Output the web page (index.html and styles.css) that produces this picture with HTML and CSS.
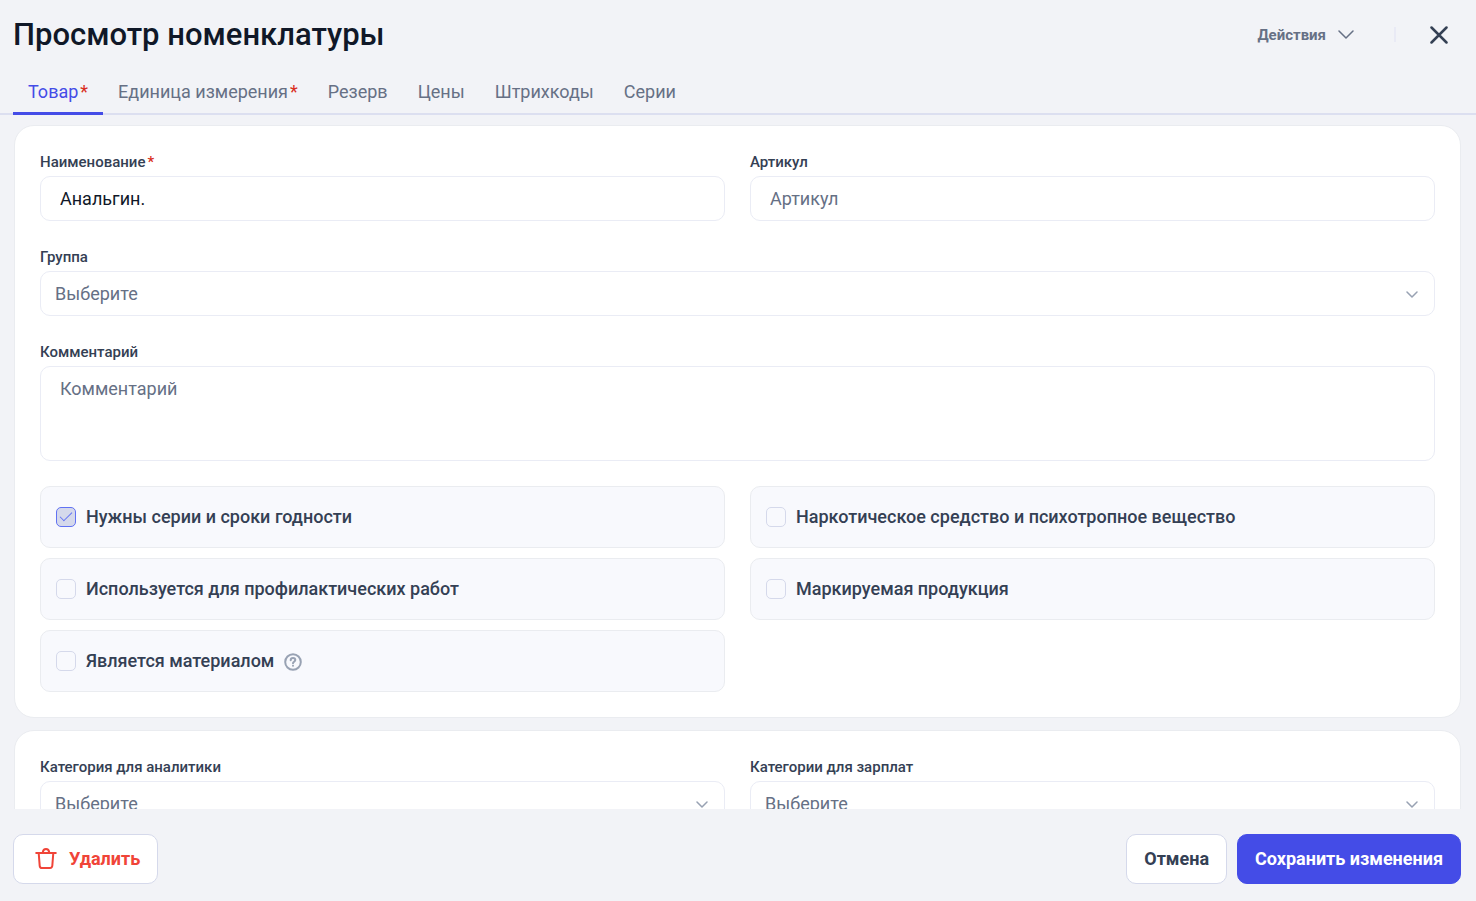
FILE: index.html
```html
<!DOCTYPE html>
<html lang="ru">
<head>
  <meta charset="UTF-8">
  <meta name="viewport" content="width=device-width, initial-scale=1.0">
  <title>Просмотр номенклатуры</title>
  <link rel="stylesheet" href="styles.css">
</head>
<body>
  <header class="header">
    <h1>Просмотр номенклатуры</h1>
    <div class="header-tools">
      <button type="button" class="actions">
        Действия
        <svg width="16" height="10" viewBox="0 0 16 10"><path d="M1 1l7 7 7-7"/></svg>
      </button>
      <span class="divider"></span>
      <button type="button" class="close" aria-label="Закрыть">
        <svg width="18" height="18" viewBox="0 0 18 18"><path d="M1.500 1.500l15 15M16.500 1.500l-15 15"/></svg>
      </button>
    </div>
  </header>

  <nav class="tabs">
    <a href="#" class="tab active">Товар<span class="required">*</span></a>
    <a href="#" class="tab">Единица измерения<span class="required">*</span></a>
    <a href="#" class="tab">Резерв</a>
    <a href="#" class="tab">Цены</a>
    <a href="#" class="tab">Штрихкоды</a>
    <a href="#" class="tab">Серии</a>
  </nav>

  <main class="content">
    <section class="card">
      <div class="row">
        <div class="field">
          <label for="name">Наименование<span class="required">*</span></label>
          <input type="text" id="name" class="control" value="Анальгин.">
        </div>
        <div class="field">
          <label for="sku">Артикул</label>
          <input type="text" id="sku" class="control" placeholder="Артикул">
        </div>
      </div>

      <div class="field">
        <label for="group">Группа</label>
        <div class="select">
          <select id="group" class="control"><option>Выберите</option></select>
          <svg class="chevron" width="12" height="8" viewBox="0 0 12 8"><path d="M1 1l5 5 5-5"/></svg>
        </div>
      </div>

      <div class="field">
        <label for="comment">Комментарий</label>
        <textarea id="comment" class="control" placeholder="Комментарий"></textarea>
      </div>

      <div class="checks">
        <label class="check"><input type="checkbox" checked disabled>Нужны серии и сроки годности</label>
        <label class="check"><input type="checkbox">Наркотическое средство и психотропное вещество</label>
        <label class="check"><input type="checkbox">Используется для профилактических работ</label>
        <label class="check"><input type="checkbox">Маркируемая продукция</label>
        <label class="check"><input type="checkbox">Является материалом
          <svg class="help" width="18" height="20" viewBox="0 0 18 20">
            <circle cx="9" cy="11" r="7.800"/>
            <path d="M6.700 9.300C6.700 7.900 7.700 7.100 9 7.100s2.300.8 2.300 2c0 1.600-2.300 1.700-2.300 3.100"/>
            <path d="M9 14.700v.1"/>
          </svg>
        </label>
      </div>
    </section>

    <section class="card">
      <div class="row">
        <div class="field">
          <label for="analytics">Категория для аналитики</label>
          <div class="select">
            <select id="analytics" class="control"><option>Выберите</option></select>
            <svg class="chevron" width="12" height="8" viewBox="0 0 12 8"><path d="M1 1l5 5 5-5"/></svg>
          </div>
        </div>
        <div class="field">
          <label for="salary">Категории для зарплат</label>
          <div class="select">
            <select id="salary" class="control"><option>Выберите</option></select>
            <svg class="chevron" width="12" height="8" viewBox="0 0 12 8"><path d="M1 1l5 5 5-5"/></svg>
          </div>
        </div>
      </div>
    </section>
  </main>

  <footer class="footer">
    <button type="button" class="button delete">
      <svg width="22" height="22" viewBox="0 0 22 22">
        <path d="M1.200 5h19.600M7.700 4.600C8 2.300 9.100 1 11 1s3 1.300 3.300 3.600M3.700 5l1 12.800c.1 1.500.9 2.200 2.300 2.200h8c1.400 0 2.200-.7 2.300-2.200l1-12.800"/>
      </svg>
      Удалить
    </button>
    <button type="button" class="button cancel">Отмена</button>
    <button type="button" class="button primary">Сохранить изменения</button>
  </footer>
</body>
</html>
```
FILE: styles.css
```css
* {
  box-sizing: border-box;
}
body {
  display: flex;
  flex-direction: column;
  height: 100vh;
  margin: 0;
  background-color: #f2f3f7;
  font-family: Roboto, sans-serif;
  font-size: 18px;
  color: #344054;
}
button, input, select, textarea {
  font: inherit;
  color: inherit;
}
svg {
  flex-shrink: 0;
  fill: none;
  stroke: currentColor;
  stroke-linecap: round;
  stroke-linejoin: round;
}
.header {
  display: flex;
  align-items: center;
  justify-content: space-between;
  height: 69px;
  padding: 0 28px 0 13px;
}
.header h1 {
  margin: 0;
  font-size: 31px;
  font-weight: 500;
  color: #101828;
}
.header-tools {
  display: flex;
  align-items: center;
}
.actions, .close {
  display: flex;
  align-items: center;
  padding: 0;
  border: 0;
  background: none;
  cursor: pointer;
}
.actions {
  gap: 12px;
  font-size: 15px;
  font-weight: 700;
  line-height: 20px;
  color: #667085;
}
.actions svg {
  stroke-width: 1.5;
}
.divider {
  width: 2px;
  height: 15px;
  margin: 0 34px 0 40px;
  background-color: #e9eaf5;
}
.close svg {
  stroke-width: 2.5;
}
.tabs {
  display: flex;
  flex-shrink: 0;
  height: 46px;
  padding: 0 13px;
  border-bottom: 2px solid #dcdff0;
}
.tab {
  height: 46px;
  padding: 0 15px;
  border-bottom: 3px solid transparent;
  line-height: 46px;
  color: #667085;
  text-decoration: none;
}
.tab.active {
  border-color: #444ce7;
  color: #444ce7;
}
.required {
  margin-left: 2px;
  color: #d92d20;
}
.content {
  flex: 1;
  min-height: 0;
  padding: 10px 15px 10px 14px;
  overflow-y: auto;
  scrollbar-width: none;
}
.card {
  display: flex;
  flex-direction: column;
  gap: 25px;
  margin-bottom: 12px;
  padding: 25px;
  border: 1px solid #eaecf0;
  border-radius: 20px;
  background-color: #ffffff;
}
.row, .checks {
  display: grid;
  grid-template-columns: 1fr 1fr;
  column-gap: 25px;
}
.checks {
  row-gap: 10px;
}
.field {
  display: flex;
  flex-direction: column;
  gap: 3px;
}
.field label {
  font-size: 15px;
  font-weight: 500;
  line-height: 22px;
}
.control {
  width: 100%;
  height: 45px;
  padding: 0 19px;
  border: 1px solid #eaecf5;
  border-radius: 10px;
  background-color: #ffffff;
  color: #101828;
}
.control::placeholder {
  color: #667085;
}
textarea.control {
  display: block;
  height: 95px;
  padding: 11px 19px;
  resize: none;
}
.select {
  position: relative;
}
select.control {
  display: block;
  padding: 0 14px;
  appearance: none;
  color: #667085;
}
.chevron {
  position: absolute;
  top: 20px;
  right: 17px;
  color: #98a2b3;
  stroke-width: 1.5;
  pointer-events: none;
}
.check {
  display: flex;
  align-items: center;
  gap: 10px;
  height: 62px;
  padding: 0 15px;
  border: 1px solid #eaecf0;
  border-radius: 10px;
  background-color: #f8f9fd;
  font-weight: 500;
  line-height: 20px;
}
.check input {
  width: 20px;
  height: 20px;
  margin: 0;
  border: 1px solid #d5d9eb;
  border-radius: 5px;
  appearance: none;
}
.check input:checked {
  display: grid;
  place-items: center;
  border-color: #6172f3;
  background-color: #d5d9eb;
}
.check input:checked::before {
  content: "";
  width: 11px;
  height: 5px;
  margin-bottom: 4px;
  border: solid #6172f3;
  border-width: 0 0 1px 1px;
  transform: rotate(-45deg);
}
.help {
  color: #98a2b3;
  stroke-width: 2;
}
.footer {
  display: flex;
  gap: 10px;
  flex-shrink: 0;
  padding: 25px 15px 17px 13px;
}
.button {
  display: flex;
  align-items: center;
  height: 50px;
  padding: 0 17px;
  border: 1px solid #d5d9eb;
  border-radius: 10px;
  background-color: #ffffff;
  font-weight: 700;
  line-height: 20px;
  cursor: pointer;
}
.delete {
  gap: 12px;
  margin-right: auto;
  padding-left: 21px;
  color: #f04438;
}
.delete svg {
  stroke-width: 2;
}
.primary {
  border-color: #444ce7;
  background-color: #444ce7;
  color: #ffffff;
}
```
